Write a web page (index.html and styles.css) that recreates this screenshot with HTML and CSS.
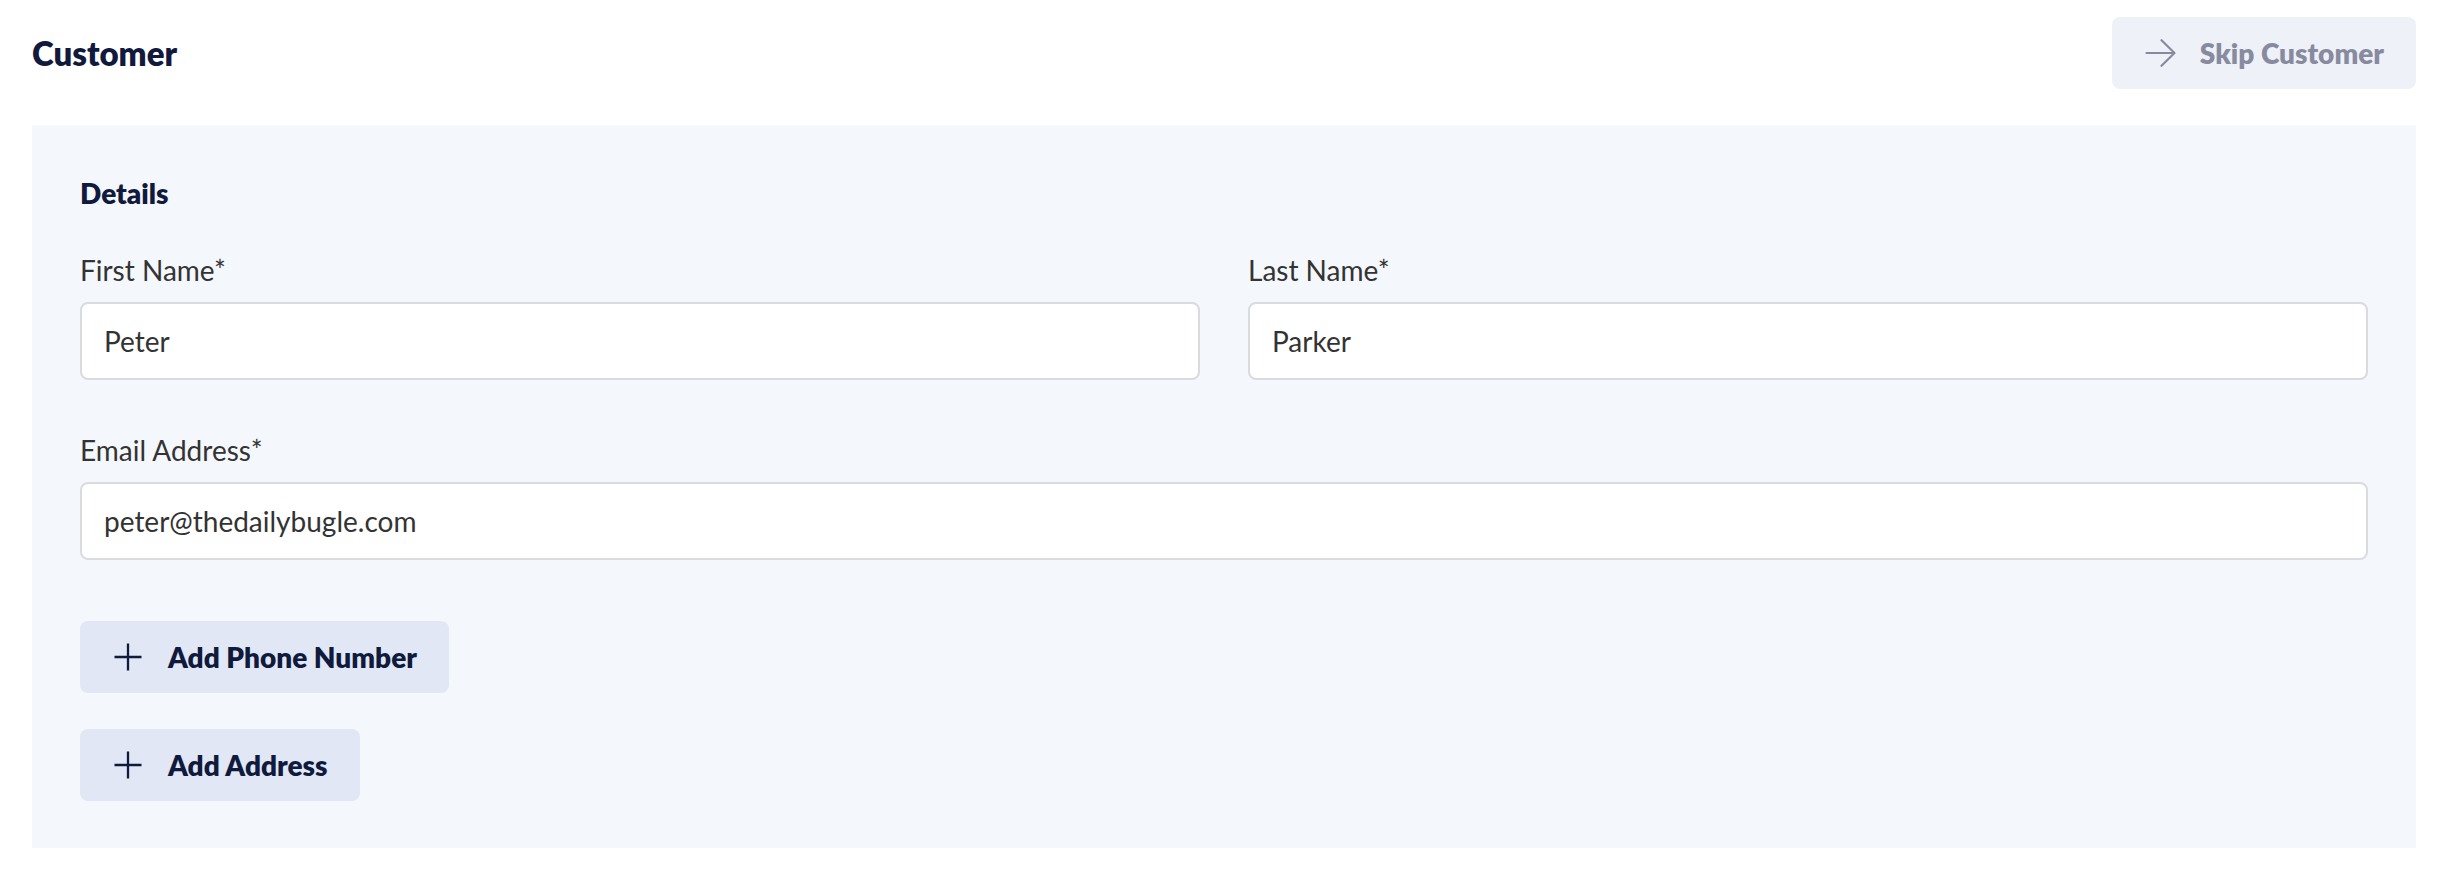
FILE: index.html
```html
<!DOCTYPE html>
<html lang="en">
<head>
<meta charset="utf-8">
<title>Customer</title>
<link rel="stylesheet" href="styles.css">
</head>
<body>
<div class="page">
  <header class="header">
    <h1 class="title">Customer</h1>
    <button class="btn btn-skip" type="button">
      <svg class="icon" viewBox="0 0 32 32" width="32" height="32" aria-hidden="true">
        <path d="M2.5 16H30.5M17.5 3.2L30.5 16L17.5 28.8" fill="none" stroke="currentColor" stroke-width="2.2" stroke-linecap="round" stroke-linejoin="round"/>
      </svg>
      <span>Skip Customer</span>
    </button>
  </header>
  <section class="panel">
    <h2 class="section-title">Details</h2>
    <div class="fields">
      <div class="field">
        <label class="label" for="first">First Name*</label>
        <input class="input" id="first" type="text" value="Peter">
      </div>
      <div class="field">
        <label class="label" for="last">Last Name*</label>
        <input class="input" id="last" type="text" value="Parker">
      </div>
      <div class="field field-wide">
        <label class="label" for="email">Email Address*</label>
        <input class="input" id="email" type="text" value="peter@thedailybugle.com">
      </div>
    </div>
    <div class="actions">
      <button class="btn btn-add" type="button">
        <svg class="icon" viewBox="0 0 32 32" width="32" height="32" aria-hidden="true">
          <path d="M16 2.5V29.5M2.5 16H29.5" fill="none" stroke="currentColor" stroke-width="2.3"/>
        </svg>
        <span>Add Phone Number</span>
      </button>
      <button class="btn btn-add" type="button">
        <svg class="icon" viewBox="0 0 32 32" width="32" height="32" aria-hidden="true">
          <path d="M16 2.5V29.5M2.5 16H29.5" fill="none" stroke="currentColor" stroke-width="2.3"/>
        </svg>
        <span>Add Address</span>
      </button>
    </div>
  </section>
</div>
</body>
</html>
```

FILE: styles.css
```css
* {
  box-sizing: border-box;
}

html, body {
  margin: 0;
  padding: 0;
  background: #ffffff;
}

body {
  font-family: Lato, "Noto Sans", "Liberation Sans", sans-serif;
  color: #333333;
}

.page {
  padding: 17px 34px 0 32px;
}

.header {
  display: flex;
  align-items: center;
  justify-content: space-between;
  height: 72px;
  margin-bottom: 36px;
}

.title {
  margin: 0;
  font-size: 33px;
  font-weight: 800;
  line-height: 40px;
  color: #111a3c;
}

.btn {
  display: inline-flex;
  align-items: center;
  gap: 24px;
  height: 72px;
  padding: 0 32px;
  border: none;
  border-radius: 8px;
  font-family: Lato, "Noto Sans", "Liberation Sans", sans-serif;
  font-size: 28px;
  font-weight: 800;
  line-height: 34px;
  cursor: pointer;
}

.icon {
  display: block;
  width: 32px;
  height: 32px;
  flex: none;
}

.btn-skip {
  background: #eef1f8;
  color: #888b9f;
}

.btn-add {
  background: #e1e7f4;
  color: #0f1a3d;
}

.panel {
  background: #f4f7fc;
  padding: 48px 48px 47px;
}

.section-title {
  margin: 0 0 40px;
  font-size: 28px;
  font-weight: 800;
  line-height: 40px;
  color: #111a3c;
}

.fields {
  display: grid;
  grid-template-columns: 1fr 1fr;
  column-gap: 48px;
  row-gap: 53px;
}

.field {
  display: flex;
  flex-direction: column;
}

.field-wide {
  grid-column: 1 / -1;
}

.label {
  display: block;
  font-size: 28px;
  line-height: 34px;
  margin-bottom: 15px;
  color: #333333;
}

.input {
  display: block;
  width: 100%;
  height: 78px;
  padding: 0 22px;
  border: 2px solid #d9dbe0;
  border-radius: 8px;
  background: #ffffff;
  font-family: Lato, "Noto Sans", "Liberation Sans", sans-serif;
  font-size: 28px;
  color: #333333;
  outline: none;
}

.actions {
  display: flex;
  flex-direction: column;
  align-items: flex-start;
  gap: 36px;
  margin-top: 61px;
}
```
